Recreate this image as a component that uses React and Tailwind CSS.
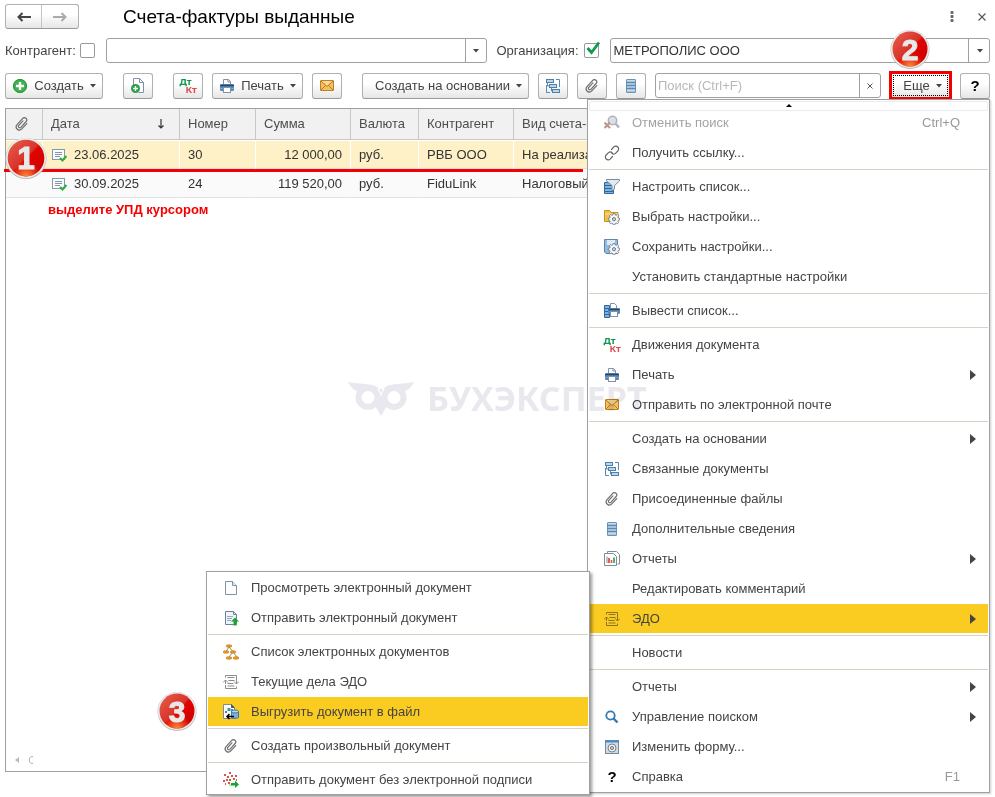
import React from "react";

/* ---------- icons ---------- */

function Svg({ children, className = "" }) {
  return (
    <svg viewBox="0 0 16 16" className={`h-4 w-4 shrink-0 ${className}`} fill="none" aria-hidden="true">
      {children}
    </svg>
  );
}

const PlusCircle = () => (
  <Svg>
    <circle cx="8" cy="8" r="7" fill="#3fb24f" />
    <circle cx="8" cy="8" r="6.5" stroke="#2c9440" />
    <path d="M8 4v8M4 8h8" stroke="#fff" strokeWidth="2.4" />
  </Svg>
);

const NewDoc = () => (
  <Svg>
    <path d="M3.5 7V.5h6l4 4v10h-5" fill="#fff" stroke="#7d92a8" />
    <path d="M9.500 .5v4h4" stroke="#7d92a8" />
    <circle cx="5.500" cy="10.500" r="4.500" fill="#2d9e47" />
    <path d="M5.500 8v5M3 10.500h5" stroke="#fff" strokeWidth="1.400" />
  </Svg>
);

const DtKt = () => (
  <Svg className="overflow-visible">
    <text x="-0.500" y="6.500" fontSize="9.500" fontWeight="bold" fontFamily="Noto Sans, sans-serif" fill="#12964f">Дт</text>
    <text x="5.500" y="15" fontSize="9.500" fontWeight="bold" fontFamily="Noto Sans, sans-serif" fill="#dd4b4b">Кт</text>
  </Svg>
);

const Printer = () => (
  <Svg>
    <path d="M4.500 6V1.500h5l2 2V6" fill="#fff" stroke="#7b93ab" />
    <path d="M9 1.500V4h2.500" stroke="#7b93ab" />
    <rect x="1" y="6" width="14" height="7" rx="1.500" fill="#5b86b0" />
    <path d="M1 7.500h14" stroke="#254a70" strokeWidth="1.500" />
    <path d="M1.500 10.500h2M12.500 10.500h2" stroke="#8fb0cf" />
    <rect x="4.500" y="9.500" width="7" height="5" fill="#fff" stroke="#7b93ab" />
  </Svg>
);

const Mail = () => (
  <Svg>
    <rect x="1.500" y="2.500" width="13" height="10" rx=".5" fill="#f3bf5f" stroke="#c07f22" />
    <path d="M2 3l6 5.500L14 3" fill="#fbd98c" stroke="#a96c1a" strokeWidth=".9" />
    <path d="M2 12l4.500-4.500M14 12L9.500 7.500" stroke="#a96c1a" strokeWidth=".8" />
  </Svg>
);

const Related = () => (
  <Svg>
    <path d="M11 1.500h3.500V9M5 14.500H1.500V7" stroke="#5788b0" />
    <path d="M2.500 4v4h2M6.500 9v4h2" stroke="#5788b0" />
    <rect x="1.500" y="1.500" width="7" height="3" fill="#bcd6ea" stroke="#4c81ab" />
    <rect x="4.500" y="6.500" width="7" height="3" fill="#bcd6ea" stroke="#4c81ab" />
    <rect x="7.500" y="11.500" width="7" height="3" fill="#bcd6ea" stroke="#4c81ab" />
  </Svg>
);

const Clip = () => (
  <Svg>
    <g transform="rotate(42 8 8)" stroke="#6e6e6e" strokeWidth="1.200" strokeLinecap="round">
      <path d="M11.200 4.500v7.300a3.200 3.200 0 0 1-6.400 0V3.400a2.300 2.300 0 0 1 4.600 0v7.800a1.400 1.400 0 0 1-2.800 0V5" />
    </g>
  </Svg>
);

const Stack = () => (
  <Svg>
    <rect x="3.500" y="1.500" width="9" height="13" rx=".5" fill="#a5c3dc" stroke="#6b93b5" />
    <path d="M3 4.500h10M3 7.500h10M3 10.500h10" stroke="#5e88ac" />
    <path d="M4 12.500h8M4 2.500h8" stroke="#c8dcec" />
  </Svg>
);

const CancelSearch = () => (
  <Svg className="opacity-70">
    <circle cx="8.500" cy="5.500" r="4.200" fill="#ccd4da" stroke="#8e979f" strokeWidth="1.600" />
    <path d="M11.500 8.500l3.500 4" stroke="#8e979f" strokeWidth="2.400" />
    <path d="M.5 7.500l5.500 5.500M6 7.500L.5 13" stroke="#a06a62" strokeWidth="2.200" />
  </Svg>
);

const LinkIcon = () => (
  <Svg>
    <g stroke="#666" strokeWidth="1.200" strokeLinecap="round">
      <path d="M7.500 4.500l2.300-2.600a2.700 2.700 0 0 1 4 .1 2.800 2.800 0 0 1 0 4L11.500 8.300a2.600 2.600 0 0 1-3.600 0" />
      <path d="M8.500 11.500l-2.300 2.600a2.700 2.700 0 0 1-4-.1 2.800 2.800 0 0 1 0-4L4.500 7.700a2.600 2.600 0 0 1 3.600 0" />
    </g>
  </Svg>
);

const FilterList = () => (
  <Svg>
    <path d="M.5 3.500h9v11h-9z" fill="#7cb3e0" stroke="#2f689c" />
    <path d="M1 6.500h8M1 9.500h8M1 12.500h8" stroke="#2f689c" />
    <path d="M2.500 .5h13v1.500l-5 4.500V10l-2.500 2V6.500L2.500 2z" fill="#e3e9ee" stroke="#7b8b9a" />
  </Svg>
);

const gearPath =
  "M9.200 4.500h1.600l.4 1.400 1 .4 1.300-.7 1.100 1.100-.7 1.300.4 1 1.400.4v1.600l-1.400.4-.4 1 .7 1.300-1.100 1.100-1.300-.7-1 .4-.4 1.400H9.200l-.4-1.400-1-.4-1.300.7-1.100-1.100.7-1.300-.4-1-1.400-.4V9.400l1.400-.4.4-1-.7-1.300 1.100-1.100 1.300.7 1-.4z";

const Gear = () => (
  <>
    <path d={gearPath} fill="#f4f6f8" stroke="#6f7a85" strokeWidth=".9" />
    <circle cx="10" cy="10.200" r="1.600" fill="#cfd6dd" stroke="#6f7a85" />
  </>
);

const FolderGear = () => (
  <Svg>
    <path d="M.5 12.500v-11h5l1.500 2h7v9z" fill="#f4c04c" stroke="#c98f22" />
    <path d="M1 5h13" stroke="#fde2a0" />
    <Gear />
  </Svg>
);

const DiskGear = () => (
  <Svg>
    <path d="M.5 .5h13v14H2l-1.500-1.500z" fill="#8fbbe2" stroke="#5f87ad" />
    <rect x="3" y="1" width="8" height="5" fill="#dfeaf4" />
    <Gear />
  </Svg>
);

const PrintList = () => (
  <Svg>
    <path d="M.5 2.500h5v12h-5z" fill="#7cb3e0" stroke="#2f689c" />
    <path d="M1 5.500h5M1 8.500h5M1 11.500h5" stroke="#2f689c" />
    <path d="M6.500 5V.5h4l2 2V5" fill="#fff" stroke="#7b93ab" />
    <rect x="4" y="5" width="12" height="6" rx="1.200" fill="#5b86b0" />
    <path d="M4.500 6.500h11" stroke="#254a70" strokeWidth="1.400" />
    <rect x="6.500" y="8.500" width="7" height="5" fill="#fff" stroke="#7b93ab" />
  </Svg>
);

const Reports = () => (
  <Svg>
    <path d="M3.500 2V.5h9l3 3v9.500h-2" fill="#fff" stroke="#7d8c9b" />
    <path d="M.5 2.500h9l3 3v9H.5z" fill="#fff" stroke="#7d8c9b" />
    <path d="M3 12V5.500" stroke="#888" strokeWidth="1" />
    <path d="M5 12V7" stroke="#d33" strokeWidth="1.600" />
    <path d="M7.500 12V9" stroke="#d55" strokeWidth="1.600" />
    <path d="M10 12V6.500" stroke="#3a9a3a" strokeWidth="1.600" />
  </Svg>
);

const Edo = ({ dark = false }) => (
  <Svg>
    <g stroke={dark ? "#8d7420" : "#8b8b8b"}>
      <path d="M2.500 3.500v-2h11V6M2.500 11v3.500h11v-2" />
      <path d="M4.500 3.500h7M5.500 6.500h6M4.500 9.500h6M4.500 12h7" />
      <path d="M2.500 10V6M0 8.500L2.500 6 5 8.500M13.500 6v4M11 7.500l2.500 2.500L16 7.500" />
    </g>
  </Svg>
);

const Magnifier = () => (
  <Svg>
    <circle cx="6.500" cy="6.500" r="4.200" stroke="#3579ad" strokeWidth="1.800" />
    <path d="M9.500 9.500l4 4" stroke="#3579ad" strokeWidth="2.400" />
  </Svg>
);

const FormGear = () => (
  <Svg>
    <rect x="1.500" y="1.500" width="13" height="13" fill="#d3dbe2" stroke="#77899a" />
    <path d="M1 2.500h14" stroke="#3f8fd0" strokeWidth="2" />
    <circle cx="8" cy="9" r="4" fill="#eef2f5" stroke="#77828d" strokeWidth="1" />
    <circle cx="8" cy="9" r="1.600" fill="#bcc5cd" stroke="#77828d" />
  </Svg>
);

const Question = () => (
  <span className="w-4 shrink-0 text-center text-[15px] font-bold leading-4 text-black">?</span>
);

const Page = () => (
  <Svg>
    <path d="M2.500 1.500h7l4 4v9h-11z" fill="#fdfdfe" stroke="#8093a6" />
    <path d="M9.500 1.500v4h4" fill="#e2eaf1" stroke="#8093a6" />
  </Svg>
);

const SendDoc = () => (
  <Svg>
    <path d="M2.500 1.500h8l3 3v10h-11z" fill="#eef4fa" stroke="#6b8299" />
    <path d="M10.500 1.500v3h3" stroke="#6b8299" />
    <path d="M4 6.500h6M4 8.500h5M4 10.500h4" stroke="#8fa8c0" />
    <path d="M12 7.500l4 4h-2.500v4h-3v-4H8z" fill="#1ba52b" />
  </Svg>
);

const Tree = () => (
  <Svg>
    <path d="M6 3L3 7.500M6 3l4 4.500M10 8l-4 5M10 8l4 5" stroke="#8b8b8b" />
    <g fill="#f8ac1c" stroke="#d07d0c">
      <rect x="3.500" y="1" width="5" height="2" rx=".8" />
      <rect x=".5" y="7" width="5" height="2" rx=".8" />
      <rect x="7.500" y="7" width="5" height="2" rx=".8" />
      <rect x="3.500" y="13" width="5" height="2" rx=".8" />
      <rect x="10.500" y="13" width="5" height="2" rx=".8" />
    </g>
  </Svg>
);

const Export = () => (
  <Svg>
    <path d="M.5 .5h8l3 3v11H.5z" fill="#fff" stroke="#7d8c9b" />
    <path d="M8.500 .5v3h3" fill="#456" stroke="#456" />
    <rect x="4.500" y="4" width="3" height="3" fill="#2fa07a" />
    <path d="M2 8h2M8 6h2" stroke="#4a7cc0" strokeWidth="2" />
    <path d="M8.500 7.500v6c0 1 7 1 7 0v-6z" fill="#7db0dc" stroke="#3e74a5" />
    <ellipse cx="12" cy="7.500" rx="3.500" ry="1.500" fill="#b9d7ef" stroke="#3e74a5" />
    <path d="M11 12.500H4M6.500 10L4 12.500 6.500 15" stroke="#000" strokeWidth="1.600" />
  </Svg>
);

const NoSign = () => (
  <Svg>
    <g fill="#d9534f">
      <rect x="1" y="2" width="2" height="2" /><rect x="6" y="0" width="2" height="2" />
      <rect x="4" y="4" width="2" height="2" /><rect x="8" y="3" width="2" height="2" />
      <rect x="12" y="3" width="2" height="2" /><rect x="10" y="6" width="2" height="2" />
      <rect x="0" y="8" width="2" height="2" /><rect x="3" y="7" width="2" height="2" />
      <rect x="6" y="7" width="2" height="2" /><rect x="13" y="7" width="1" height="2" />
      <rect x="5" y="10" width="2" height="2" /><rect x="2" y="11" width="1" height="2" />
    </g>
    <rect x="6" y="12" width="2" height="2" fill="#b9e6b9" />
    <path d="M8 11h4V8.500l4 4-4 3.500v-2.500H8z" fill="#1ba52b" />
  </Svg>
);

const Posted = () => (
  <Svg>
    <rect x="1.500" y="2.500" width="12" height="10" fill="#fbfcfe" stroke="#8599ad" />
    <path d="M4 5.500h7M4 7.500h7M4 9.500h5" stroke="#7f95ab" />
    <path d="M9 11l2.500 2.500 4-4.500" stroke="#2fae3e" strokeWidth="2.200" />
  </Svg>
);

const Caret = ({ className = "" }) => (
  <svg viewBox="0 0 6 4" className={`h-1 w-1.5 shrink-0 ${className}`} aria-hidden="true">
    <path d="M0 0h6L3 3.500z" fill="#444" />
  </svg>
);

/* ---------- shared parts ---------- */

function ToolButton({ children, className = "", ...rest }) {
  return (
    <button
      type="button"
      className={`flex h-[26px] shrink-0 items-center justify-center rounded-[3px] border border-[#b0b0b0] border-b-[#999] bg-linear-to-b from-white from-40% to-[#e6e6e6] text-[#444] ${className}`}
      {...rest}
    >
      {children}
    </button>
  );
}

function Combo({ label, value }) {
  return (
    <div className="relative flex-1">
      <select
        aria-label={label}
        className="block h-[25px] w-full appearance-none rounded-[3px] border border-[#a0a0a0] bg-white pl-[3px] pr-6 text-[#333]"
      >
        <option>{value}</option>
      </select>
      <span className="pointer-events-none absolute inset-y-0 right-0 flex w-[22px] items-center justify-center border-l border-[#a0a0a0]">
        <Caret />
      </span>
    </div>
  );
}

function Badge({ n, className }) {
  return (
    <svg viewBox="0 0 40 40" className={`absolute ${className}`} role="img" aria-label={n}>
      <defs>
        <linearGradient id={`badge${n}`} x1="0" y1="0" x2="1" y2="1">
          <stop offset="0" stopColor="#e8604e" />
          <stop offset=".48" stopColor="#d8342a" />
          <stop offset=".52" stopColor="#e00400" />
          <stop offset="1" stopColor="#c80000" />
        </linearGradient>
        <radialGradient id={`glow${n}`} cx=".5" cy="1" r=".4">
          <stop offset="0" stopColor="#ff8a3c" />
          <stop offset="1" stopColor="#ff8a3c" stopOpacity="0" />
        </radialGradient>
      </defs>
      <circle cx="20" cy="20.500" r="19.500" fill="#bdbdbd" />
      <circle cx="20" cy="20" r="19" fill="#ececec" />
      <circle cx="20" cy="20" r="17.500" fill={`url(#badge${n})`} />
      <circle cx="20" cy="20" r="17.500" fill={`url(#glow${n})`} />
      <text
        x="20"
        y="30.500"
        textAnchor="middle"
        fontSize="30"
        fontWeight="bold"
        fontFamily="Liberation Sans, Arial, sans-serif"
        fill="#e9e9e9"
        stroke="#e9e9e9"
        strokeWidth="1"
      >
        {n}
      </text>
    </svg>
  );
}

function MenuItem({ icon, label, shortcut, arrow, active, disabled }) {
  const color = disabled ? "text-[#a3a3a3]" : "text-[#444]";
  return (
    <button
      type="button"
      role="menuitem"
      disabled={disabled}
      className={`mt-px flex h-[29px] w-full items-center gap-3 pl-[15px] text-left ${color} ${active ? "bg-[#facb20]" : ""}`}
    >
      {icon || <span className="w-4 shrink-0" />}
      <span className="flex-1 whitespace-nowrap">{label}</span>
      {shortcut && <span className="pr-7 text-[#999]">{shortcut}</span>}
      {arrow && (
        <svg viewBox="0 0 6 10" className="mr-3 h-2.5 w-1.5" aria-hidden="true">
          <path d="M0 0l6 5-6 5z" fill="#444" />
        </svg>
      )}
    </button>
  );
}

const Divider = () => <div role="separator" className="my-0.5 h-px bg-[#d6d2c4]" />;

function MenuItems({ items }) {
  return items.map((item, i) => (item === "-" ? <Divider key={i} /> : <MenuItem key={i} {...item} />));
}

/* ---------- data ---------- */

const moreMenu = [
  { icon: <CancelSearch />, label: "Отменить поиск", shortcut: "Ctrl+Q", disabled: true },
  { icon: <LinkIcon />, label: "Получить ссылку..." },
  "-",
  { icon: <FilterList />, label: "Настроить список..." },
  { icon: <FolderGear />, label: "Выбрать настройки..." },
  { icon: <DiskGear />, label: "Сохранить настройки..." },
  { label: "Установить стандартные настройки" },
  "-",
  { icon: <PrintList />, label: "Вывести список..." },
  "-",
  { icon: <DtKt />, label: "Движения документа" },
  { icon: <Printer />, label: "Печать", arrow: true },
  { icon: <Mail />, label: "Отправить по электронной почте" },
  "-",
  { label: "Создать на основании", arrow: true },
  { icon: <Related />, label: "Связанные документы" },
  { icon: <Clip />, label: "Присоединенные файлы" },
  { icon: <Stack />, label: "Дополнительные сведения" },
  { icon: <Reports />, label: "Отчеты", arrow: true },
  { label: "Редактировать комментарий" },
  { icon: <Edo dark />, label: "ЭДО", arrow: true, active: true },
  "-",
  { label: "Новости" },
  "-",
  { label: "Отчеты", arrow: true },
  { icon: <Magnifier />, label: "Управление поиском", arrow: true },
  { icon: <FormGear />, label: "Изменить форму..." },
  { icon: <Question />, label: "Справка", shortcut: "F1" },
];

const edoMenu = [
  { icon: <Page />, label: "Просмотреть электронный документ" },
  { icon: <SendDoc />, label: "Отправить электронный документ" },
  "-",
  { icon: <Tree />, label: "Список электронных документов" },
  { icon: <Edo />, label: "Текущие дела ЭДО" },
  { icon: <Export />, label: "Выгрузить документ в файл", active: true },
  "-",
  { icon: <Clip />, label: "Создать произвольный документ" },
  "-",
  { icon: <NoSign />, label: "Отправить документ без электронной подписи" },
];

const rows = [
  { date: "23.06.2025", num: "30", sum: "12 000,00", cur: "руб.", party: "РВБ ООО", kind: "На реализацию", selected: true },
  { date: "30.09.2025", num: "24", sum: "119 520,00", cur: "руб.", party: "FiduLink", kind: "Налоговый агент" },
];

function InvoiceTable() {
  const th = "border-b border-r border-[#c8c8c8] px-2 text-left font-normal";
  return (
    <table className="w-full table-fixed border-separate border-spacing-0">
      <colgroup>
        <col className="w-[37px]" />
        <col className="w-[137px]" />
        <col className="w-[76px]" />
        <col className="w-[95px]" />
        <col className="w-[68px]" />
        <col className="w-[95px]" />
        <col />
      </colgroup>
      <thead>
        <tr className="h-[31px] bg-[#f1f1f1] text-[#4d4d4d]">
          <th className={th} aria-label="Файлы"><Clip /></th>
          <th className={th}>
            <span className="flex items-center justify-between pr-1.5">
              Дата
              <svg viewBox="0 0 8 10" className="h-2.5 w-2" fill="none" aria-hidden="true">
                <path d="M4 0v9M1.500 6.500L4 9l2.500-2.500" stroke="#333" strokeWidth="1.200" />
              </svg>
            </span>
          </th>
          <th className={th}>Номер</th>
          <th className={th}>Сумма</th>
          <th className={th}>Валюта</th>
          <th className={th}>Контрагент</th>
          <th className={th}>Вид счета-фактуры</th>
        </tr>
      </thead>
      <tbody>
        {rows.map((r) => {
          const td = `border-b border-r border-t border-t-white px-2 whitespace-nowrap ${
            r.selected ? "border-b-[#ddd] border-r-white bg-[#fef1c8]" : "border-b-[#e2e2e2] border-r-[#fafafa] bg-[#fafafa]"
          }`;
          return (
            <tr key={r.num} className="h-[29px] text-[#333]">
              <td className={td} />
              <td className={td}>
                <span className="flex items-center gap-[7px]"><Posted />{r.date}</span>
              </td>
              <td className={td}>{r.num}</td>
              <td className={`${td} text-right`}>{r.sum}</td>
              <td className={td}>{r.cur}</td>
              <td className={td}>{r.party}</td>
              <td className={td}>{r.kind}</td>
            </tr>
          );
        })}
      </tbody>
    </table>
  );
}

export default function App() {
  return (
    <div className="relative flex min-h-screen flex-col bg-white px-[5px] pb-[25px] font-['Liberation_Sans',Arial,sans-serif] text-[13px] leading-4 text-[#444]">
      {/* title bar */}
      <header className="flex h-[33px] items-center">
        <div className="flex h-[25px] overflow-hidden rounded-[3px] border border-[#b0b0b0] border-b-[#999] bg-linear-to-b from-white from-40% to-[#e6e6e6]">
          <button type="button" aria-label="Назад" className="flex w-9 items-center justify-center border-r border-[#c4c4c4]">
            <svg viewBox="0 0 14 10" className="h-2.5 w-3.5" fill="none" aria-hidden="true">
              <path d="M14 5H1.500M5.500 1L1.500 5l4 4" stroke="#444" strokeWidth="2" />
            </svg>
          </button>
          <button type="button" aria-label="Вперед" className="flex w-9 items-center justify-center">
            <svg viewBox="0 0 14 10" className="h-2.5 w-3.5" fill="none" aria-hidden="true">
              <path d="M0 5h12.500M8.500 1l4 4-4 4" stroke="#aaa" strokeWidth="2" />
            </svg>
          </button>
        </div>
        <h1 className="ml-11 flex-1 text-[19px] leading-6 text-black">Счета-фактуры выданные</h1>
        <button type="button" aria-label="Действия" className="mr-3.5 flex h-4 w-4 items-center justify-center">
          <svg viewBox="0 0 4 12" className="h-3 w-1" fill="#666" aria-hidden="true">
            <rect x=".5" y="0" width="3" height="3" rx="1" />
            <rect x=".5" y="4" width="3" height="3" rx="1" />
            <rect x=".5" y="8" width="3" height="3" rx="1" />
          </svg>
        </button>
        <button type="button" aria-label="Закрыть" className="flex h-4 w-4 items-center justify-center">
          <svg viewBox="0 0 8 8" className="h-2 w-2" fill="none" aria-hidden="true">
            <path d="M.5 .5l7 7M7.500 .5l-7 7" stroke="#555" strokeWidth="1.100" />
          </svg>
        </button>
      </header>

      {/* filters */}
      <div className="mt-[5px] flex items-center">
        <label htmlFor="use-party" className="w-[75px]">Контрагент:</label>
        <input
          id="use-party"
          type="checkbox"
          className="h-[15px] w-[15px] shrink-0 appearance-none rounded-[2px] border border-[#999] bg-white"
        />
        <div className="ml-[11px] flex flex-1"><Combo label="Контрагент" value="" /></div>
        <label htmlFor="use-org" className="ml-2.5 w-[87px]">Организация:</label>
        <span className="relative flex shrink-0">
          <input
            id="use-org"
            type="checkbox"
            defaultChecked
            className="h-[15px] w-[15px] appearance-none rounded-[2px] border border-[#999] bg-white"
          />
          <svg viewBox="0 0 15 15" className="pointer-events-none absolute -top-0.5 left-0.5 h-[15px] w-[15px]" fill="none" aria-hidden="true">
            <path d="M1.500 7l4 4.500L13 1.500" stroke="#0f9a4c" strokeWidth="2.800" />
          </svg>
        </span>
        <div className="ml-[11px] flex flex-1"><Combo label="Организация" value="МЕТРОПОЛИС ООО" /></div>
      </div>

      {/* toolbar */}
      <div className="mt-[9px] flex h-[27px] items-center gap-[9px]">
        <ToolButton className="mr-[11px] w-[98px] gap-1.5"><PlusCircle />Создать<Caret /></ToolButton>
        <ToolButton className="mr-[11px] w-[30px]" aria-label="Создать копированием"><NewDoc /></ToolButton>
        <ToolButton className="w-[30px]" aria-label="Движения документа"><DtKt /></ToolButton>
        <ToolButton className="w-[91px] gap-1.5"><Printer />Печать<Caret /></ToolButton>
        <ToolButton className="mr-[11px] w-[30px]" aria-label="Отправить по почте"><Mail /></ToolButton>
        <ToolButton className="w-[167px] gap-1.5 pl-1.5">Создать на основании<Caret /></ToolButton>
        <ToolButton className="w-[30px]" aria-label="Связанные документы"><Related /></ToolButton>
        <ToolButton className="w-[30px]" aria-label="Присоединенные файлы"><Clip /></ToolButton>
        <ToolButton className="w-[30px]" aria-label="Дополнительные сведения"><Stack /></ToolButton>
        <div className="flex h-[25px] min-w-0 flex-1 rounded-[3px] border border-[#a0a0a0] bg-white">
          <input
            type="text"
            aria-label="Поиск"
            placeholder="Поиск (Ctrl+F)"
            className="min-w-0 flex-1 px-0.5 outline-none placeholder:text-[#b8b8b8]"
          />
          <button type="button" aria-label="Очистить" className="flex w-[21px] items-center justify-center border-l border-[#a0a0a0]">
            <svg viewBox="0 0 6 6" className="h-1.5 w-1.5" fill="none" aria-hidden="true">
              <path d="M.5 .5l5 5M5.500 .5l-5 5" stroke="#555" />
            </svg>
          </button>
        </div>
        <div className="-mx-px flex h-[29px] w-[63px] shrink-0 border-[3px] border-[#f40000] bg-linear-to-b from-white from-40% to-[#e6e6e6] p-px">
          <button
            type="button"
            aria-haspopup="menu"
            aria-expanded="true"
            className="flex flex-1 items-center justify-center gap-1.5 border border-dotted border-black pl-1"
          >
            Еще<Caret />
          </button>
        </div>
        <ToolButton className="w-[30px] text-[15px] font-bold text-black" aria-label="Справка">?</ToolButton>
      </div>

      {/* list */}
      <main className="relative mt-[9px] flex flex-1 flex-col border border-[#a0a0a0]">
        <InvoiceTable />
        <div className="absolute -left-0.5 top-[60px] h-[3px] w-[579px] bg-[#f40000]" />
        <p className="ml-[42px] mt-1 font-bold text-[#f40000]">выделите УПД курсором</p>
        <svg viewBox="0 0 20 10" className="mb-1.5 ml-2 mt-auto h-2.5 w-5" fill="none" aria-hidden="true">
          <path d="M5 2v6L1 5z" fill="#bbb" />
          <path d="M19 1.500c-5-1-5 8 0 7" stroke="#aaa" />
        </svg>
      </main>

      {/* "more" menu */}
      <div role="menu" className="absolute right-[5px] top-[99px] w-[403px] border border-[#a0a0a0] bg-white p-px shadow-[1px_1px_2px_#0003]">
        <div className="flex h-2.5 justify-center rounded-[2px] border border-[#ececec] pt-0.5">
          <svg viewBox="0 0 6 3" className="h-[3px] w-1.5" aria-hidden="true">
            <path d="M0 3h6L3 0z" fill="#000" />
          </svg>
        </div>
        <div className="-mt-1">
          <MenuItems items={moreMenu} />
        </div>
      </div>

      {/* submenu of the EDI item */}
      <div role="menu" className="absolute right-[405px] top-[571px] w-[384px] border border-[#a0a0a0] bg-white px-px shadow-[2px_2px_3px_#0006]">
        <MenuItems items={edoMenu} />
      </div>

      {/* watermark */}
      <div className="pointer-events-none absolute left-[348px] top-[376px] flex items-center gap-[13px] mix-blend-multiply">
        <svg viewBox="0 0 66 36" className="h-9 w-[66px]" aria-hidden="true">
          <g fill="#e9e8ee">
            <path d="M0 2c8 2 16 1 24 3 5 1 8 4 9 9 1-5 4-8 9-9 8-2 16-1 24-3-2 5-6 8-10 10l-10-3H20l-10 3C6 10 2 7 0 2z" />
            <path d="M26 24l7 12 7-12-7-9z" />
          </g>
          <circle cx="20" cy="17.500" r="9.500" fill="#fff" stroke="#e9e8ee" strokeWidth="6" />
          <circle cx="46" cy="17.500" r="9.500" fill="#fff" stroke="#e9e8ee" strokeWidth="6" />
        </svg>
        <span className="font-['Noto_Sans',sans-serif] text-[34px] font-bold leading-[44px] text-[#e9e8ee]">БУХЭКСПЕРТ</span>
      </div>

      <Badge n="1" className="left-[5px] top-[137px] h-[42px] w-[42px]" />
      <Badge n="2" className="right-[65px] top-[29px] h-10 w-10" />
      <Badge n="3" className="left-[157px] top-[691px] h-10 w-10" />
    </div>
  );
}
